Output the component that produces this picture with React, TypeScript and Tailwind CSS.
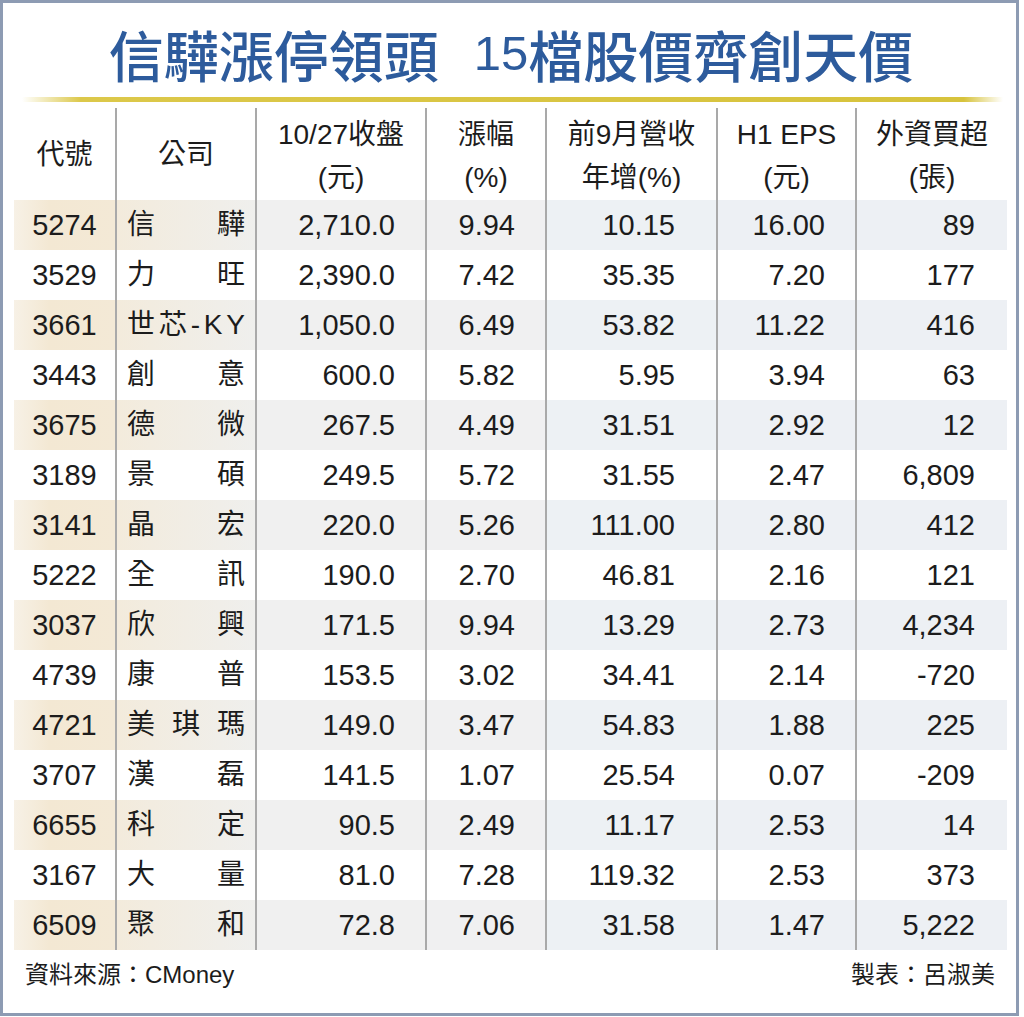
import React from "react";

type Row = [string, string[], string, string, string, string, string];

const rows: Row[] = [
  ["5274", ["信", "驊"], "2,710.0", "9.94", "10.15", "16.00", "89"],
  ["3529", ["力", "旺"], "2,390.0", "7.42", "35.35", "7.20", "177"],
  ["3661", ["世", "芯", "-", "K", "Y"], "1,050.0", "6.49", "53.82", "11.22", "416"],
  ["3443", ["創", "意"], "600.0", "5.82", "5.95", "3.94", "63"],
  ["3675", ["德", "微"], "267.5", "4.49", "31.51", "2.92", "12"],
  ["3189", ["景", "碩"], "249.5", "5.72", "31.55", "2.47", "6,809"],
  ["3141", ["晶", "宏"], "220.0", "5.26", "111.00", "2.80", "412"],
  ["5222", ["全", "訊"], "190.0", "2.70", "46.81", "2.16", "121"],
  ["3037", ["欣", "興"], "171.5", "9.94", "13.29", "2.73", "4,234"],
  ["4739", ["康", "普"], "153.5", "3.02", "34.41", "2.14", "-720"],
  ["4721", ["美", "琪", "瑪"], "149.0", "3.47", "54.83", "1.88", "225"],
  ["3707", ["漢", "磊"], "141.5", "1.07", "25.54", "0.07", "-209"],
  ["6655", ["科", "定"], "90.5", "2.49", "11.17", "2.53", "14"],
  ["3167", ["大", "量"], "81.0", "7.28", "119.32", "2.53", "373"],
  ["6509", ["聚", "和"], "72.8", "7.06", "31.58", "1.47", "5,222"],
];

const font = { fontFamily: '"Liberation Sans", "Noto Sans CJK TC", sans-serif' };
const cjk = { fontFamily: '"Noto Sans CJK TC", "Liberation Sans", sans-serif' };

export default function App() {
  return (
    <div className="w-[1024px] h-[1017px] bg-white">
      <div
        className="w-[1019px] h-[1016px] border-[3px] border-[#8d9bb3] bg-white text-[#1c1c1c] flex flex-col"
        style={font}
      >
        <div className="mt-[17px] h-[66px] leading-[66px] flex justify-center items-center text-[55px] font-medium text-[#2d5b9c] pl-[3px]">
          <span style={cjk}>信驊漲停領頭</span>
          <span className="ml-[35px] text-[49px] font-normal">15</span>
          <span style={cjk}>檔股價齊創天價</span>
        </div>
        <div className="mt-[11px] ml-[19px] w-[981px] h-[5px] bg-[linear-gradient(to_right,rgba(216,195,58,0)_0%,#dcc84a_6%,#d7c33c_96%,rgba(216,195,58,0)_100%)]" />
        <div className="mt-[6px] ml-[11px] w-[993px]">
          <div className="grid grid-cols-[101px_140px_170px_120px_171px_139px_152px] h-[92px] text-[28px] leading-[43px] text-center">
            <div className="flex items-center justify-center">代號</div>
            <div className="flex items-center justify-center border-l-2 border-[#a9a9a9]">公司</div>
            <div className="flex flex-col justify-center pt-1 border-l-2 border-[#a9a9a9]">
              <span>10/27收盤</span>
              <span>(元)</span>
            </div>
            <div className="flex flex-col justify-center pt-1 border-l-2 border-[#a9a9a9]">
              <span>漲幅</span>
              <span>(%)</span>
            </div>
            <div className="flex flex-col justify-center pt-1 border-l-2 border-[#a9a9a9]">
              <span>前9月營收</span>
              <span>年增(%)</span>
            </div>
            <div className="flex flex-col justify-center pt-1 border-l-2 border-[#a9a9a9]">
              <span>H1 EPS</span>
              <span>(元)</span>
            </div>
            <div className="flex flex-col justify-center pt-1 border-l-2 border-[#a9a9a9]">
              <span>外資買超</span>
              <span>(張)</span>
            </div>
          </div>
          {rows.map((r, i) => {
            const shaded = i % 2 === 0;
            return (
              <div
                key={r[0]}
                className="grid grid-cols-[101px_140px_170px_120px_171px_139px_152px] h-[50px] text-[29px] leading-[50px]"
              >
                <div
                  className={`text-center ${shaded ? "bg-[linear-gradient(to_right,#f7f1e6_0%,#f3e8d3_35%,#f3e9d6_100%)]" : ""}`}
                >
                  {r[0]}
                </div>
                <div
                  className={`flex justify-between px-[10px] text-[28px] border-l-2 border-[#a9a9a9] ${shaded ? "bg-[linear-gradient(to_right,#f3ebdc,#efefed)]" : ""}`}
                >
                  {r[1].map((c, k) => (
                    <span key={k}>{c}</span>
                  ))}
                </div>
                <div className={`text-right pr-[30px] border-l-2 border-[#a9a9a9] ${shaded ? "bg-[#f0f0f0]" : ""}`}>
                  {r[2]}
                </div>
                <div className={`text-right pr-[30px] border-l-2 border-[#a9a9a9] ${shaded ? "bg-[#f0f0f1]" : ""}`}>
                  {r[3]}
                </div>
                <div className={`text-right pr-[41px] border-l-2 border-[#a9a9a9] ${shaded ? "bg-[#edf1f4]" : ""}`}>
                  {r[4]}
                </div>
                <div className={`text-right pr-[30px] border-l-2 border-[#a9a9a9] ${shaded ? "bg-[#edf0f4]" : ""}`}>
                  {r[5]}
                </div>
                <div className={`text-right pr-[32px] border-l-2 border-[#a9a9a9] ${shaded ? "bg-[#edf0f4]" : ""}`}>
                  {r[6]}
                </div>
              </div>
            );
          })}
          <div className="h-[50px] flex items-center justify-between pl-[11px] pr-[12px] text-[24px]">
            <span>資料來源：CMoney</span>
            <span>製表：呂淑美</span>
          </div>
        </div>
      </div>
    </div>
  );
}
